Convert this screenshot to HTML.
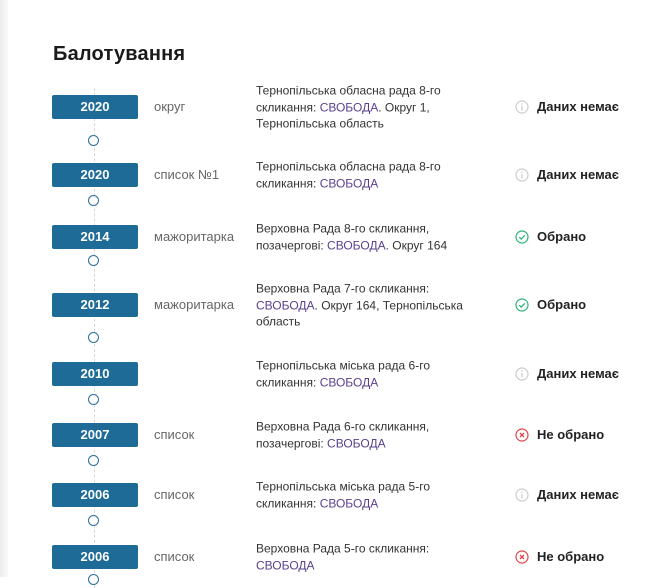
<!DOCTYPE html>
<html><head><meta charset="utf-8"><style>
body{margin:0;width:665px;height:577px;overflow:hidden;background:#fff;font-family:"Liberation Sans",sans-serif;position:relative}
.edge{position:absolute;left:0;top:0;width:8px;height:577px;background:linear-gradient(to right,#ececec,#fafafa)}
h2{position:absolute;left:53px;top:43px;margin:0;font-size:20px;font-weight:bold;color:#1a1a1a;letter-spacing:0.2px}
.line{position:absolute;left:94px;top:88px;height:500px;border-left:1px dashed #d8d8d8}
.row{position:absolute;left:0;width:665px;height:0}
.yr{position:absolute;left:52px;top:-12px;width:86px;height:24px;background:#1e6b98;border-radius:2px;color:#fff;font-weight:bold;font-size:13px;line-height:24px;text-align:center}
.type{position:absolute;left:154px;top:-8px;font-size:13px;color:#666;line-height:16px;white-space:nowrap}
.desc{position:absolute;left:256px;width:260px;font-size:12px;color:#333;line-height:16.5px;transform:translateY(-50%);white-space:nowrap}
.desc span{color:#5a3f8e}
.st{position:absolute;left:515px;top:-8px;font-size:13px;font-weight:bold;color:#222;line-height:16px;white-space:nowrap}
.st svg{position:absolute;left:0;top:1px}
.st b{margin-left:22px}
.c{position:absolute;left:88px;width:9px;height:9px;border:1.5px solid #2a6e9c;border-radius:50%;background:#fff}
</style></head><body>
<div class="edge"></div>
<h2>Балотування</h2>
<div class="line"></div>

<svg width="0" height="0" style="position:absolute"><defs>
<symbol id="i" viewBox="0 0 14 14"><circle cx="7" cy="7" r="6" fill="none" stroke="#ccc" stroke-width="1.2"/><line x1="7" y1="6" x2="7" y2="10.5" stroke="#ccc" stroke-width="1.3"/><circle cx="7" cy="4" r="0.8" fill="#ccc"/></symbol>
<symbol id="ok" viewBox="0 0 14 14"><circle cx="7" cy="7" r="6" fill="none" stroke="#2eb37a" stroke-width="1.2"/><path d="M4.3 7.2l1.9 1.9 3.6-3.8" fill="none" stroke="#2eb37a" stroke-width="1.3"/></symbol>
<symbol id="no" viewBox="0 0 14 14"><circle cx="7" cy="7" r="6" fill="none" stroke="#e0434b" stroke-width="1.2"/><path d="M5 5l4 4M9 5l-4 4" stroke="#e0434b" stroke-width="1.3"/></symbol>
</defs></svg>

<div class="row" style="top:107px"><div class="yr">2020</div><div class="type">округ</div><div class="desc">Тернопільська обласна рада 8-го<br>скликання: <span>СВОБОДА</span>. Округ 1,<br>Тернопільська область</div><div class="st"><svg width="14" height="14"><use href="#i"/></svg><b>Даних немає</b></div></div>
<div class="c" style="top:135px"></div>
<div class="row" style="top:175px"><div class="yr">2020</div><div class="type">список №1</div><div class="desc">Тернопільська обласна рада 8-го<br>скликання: <span>СВОБОДА</span></div><div class="st"><svg width="14" height="14"><use href="#i"/></svg><b>Даних немає</b></div></div>
<div class="c" style="top:195px"></div>
<div class="row" style="top:237px"><div class="yr">2014</div><div class="type">мажоритарка</div><div class="desc">Верховна Рада 8-го скликання,<br>позачергові: <span>СВОБОДА</span>. Округ 164</div><div class="st"><svg width="14" height="14"><use href="#ok"/></svg><b>Обрано</b></div></div>
<div class="c" style="top:255px"></div>
<div class="row" style="top:305px"><div class="yr">2012</div><div class="type">мажоритарка</div><div class="desc">Верховна Рада 7-го скликання:<br><span>СВОБОДА</span>. Округ 164, Тернопільська<br>область</div><div class="st"><svg width="14" height="14"><use href="#ok"/></svg><b>Обрано</b></div></div>
<div class="c" style="top:332px"></div>
<div class="row" style="top:374px"><div class="yr">2010</div><div class="type"></div><div class="desc">Тернопільська міська рада 6-го<br>скликання: <span>СВОБОДА</span></div><div class="st"><svg width="14" height="14"><use href="#i"/></svg><b>Даних немає</b></div></div>
<div class="c" style="top:394px"></div>
<div class="row" style="top:435px"><div class="yr">2007</div><div class="type">список</div><div class="desc">Верховна Рада 6-го скликання,<br>позачергові: <span>СВОБОДА</span></div><div class="st"><svg width="14" height="14"><use href="#no"/></svg><b>Не обрано</b></div></div>
<div class="c" style="top:455px"></div>
<div class="row" style="top:495px"><div class="yr">2006</div><div class="type">список</div><div class="desc">Тернопільська міська рада 5-го<br>скликання: <span>СВОБОДА</span></div><div class="st"><svg width="14" height="14"><use href="#i"/></svg><b>Даних немає</b></div></div>
<div class="c" style="top:515px"></div>
<div class="row" style="top:557px"><div class="yr">2006</div><div class="type">список</div><div class="desc">Верховна Рада 5-го скликання:<br><span>СВОБОДА</span></div><div class="st"><svg width="14" height="14"><use href="#no"/></svg><b>Не обрано</b></div></div>
<div class="c" style="top:574px"></div>
</body></html>
